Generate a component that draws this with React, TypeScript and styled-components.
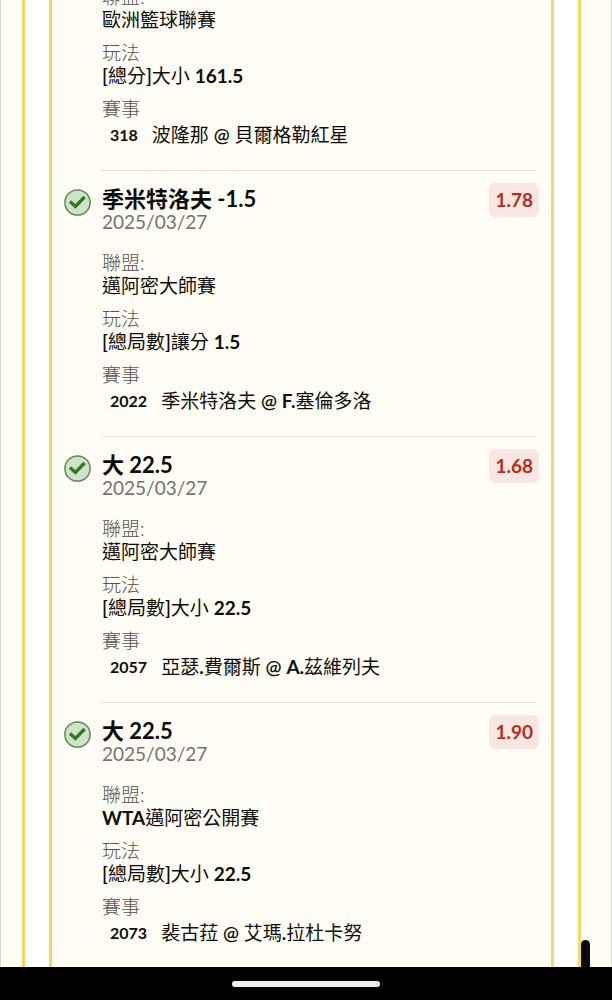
import React from "react";
import styled, { createGlobalStyle } from "styled-components";

const GlobalStyle = createGlobalStyle`
  * { box-sizing: border-box; }
  body {
    margin: 0;
    background: #fffdf5;
    color: #100e0a;
    font-family: Lato, "Noto Sans CJK TC", sans-serif;
    font-size: 19px;
    line-height: 23px;
  }
`;

const Screen = styled.div`
  display: flex;
  flex-direction: column;
  height: 100vh;
`;

const ScrollArea = styled.main`
  position: relative;
  flex: 1;
  min-height: 0;
  display: flex;
  flex-direction: column;
  justify-content: flex-end;
  overflow: hidden;
  padding: 0 30px 0 21px;
  border: solid #d6d5ce;
  border-width: 0 1px;
`;

const Panel = styled.section`
  background: #ffffff;
  border: solid;
  border-color: #f2da64 #f2da64 #f2da64 #f8d45a;
  border-width: 0 3px;
  padding: 0 24px;
`;

const SlipList = styled.ul`
  list-style: none;
  margin: 0;
  padding: 0 15px 0 12px;
  background: #fffdf5;
  border: solid;
  border-color: #f2da64 #f2da64 #f2da64 #f8d45a;
  border-width: 0 3px;
`;

const Slip = styled.li`
  display: grid;
  grid-template-columns: 27px 1fr;
  column-gap: 11px;

  &:last-child { margin-bottom: -1px; }
`;

const StatusIcon = styled.svg`
  width: 27px;
  height: 27px;
  margin-top: 19px;
`;

const Body = styled.div<{ $divided: boolean }>`
  grid-column: 2;
  border-top: ${(p) => (p.$divided ? "1px solid #e6e2d8" : "none")};
  padding: ${(p) => (p.$divided ? "16px" : "0")} 0 24px;
`;

const Header = styled.header`
  display: flex;
  justify-content: space-between;
  align-items: flex-start;
  height: 64px;
`;

const Title = styled.h2`
  margin: 0;
  font-size: 22px;
  font-weight: 700;
  line-height: 23px;
  color: #0c0b08;
`;

const PlacedOn = styled.time`
  display: block;
  color: #75736e;
`;

const Odds = styled.span`
  margin: -4px -3px 0 0;
  padding: 0 6px;
  border-radius: 6px;
  background: #f9e6e1;
  color: #b52c25;
  font-weight: 700;
  line-height: 34px;
`;

const Details = styled.dl`
  margin: 0;
`;

const Label = styled.dt`
  color: #56544f;
  font-weight: 300;
`;

const Value = styled.dd`
  margin: 0 0 10px;
`;

const MatchValue = styled.dd`
  display: flex;
  align-items: center;
  gap: 14px;
  margin: 3px 0 0 8px;
`;

const MatchNumber = styled.span`
  font-size: 16px;
  font-weight: 700;
`;

const Strong = styled.span`
  font-weight: 700;
`;

const Medium = styled.span`
  font-weight: 600;
`;

const ScrollThumb = styled.div`
  position: absolute;
  right: 21px;
  bottom: -20px;
  width: 9px;
  height: 47px;
  border-radius: 5px;
  background: #0a0a0a;
`;

const HomeBar = styled.footer`
  display: flex;
  align-items: center;
  justify-content: center;
  height: 33px;
  background: #000000;
`;

const HomeHandle = styled.div`
  width: 148px;
  height: 6px;
  border-radius: 3px;
  background: #efefef;
`;

interface Bet {
  pick?: string;
  date?: string;
  odds?: string;
  league: string;
  market: string;
  matchId: string;
  match: string;
}

const bets: Bet[] = [
  { league: "歐洲籃球聯賽", market: "[總分]大小 161.5", matchId: "318", match: "波隆那 @ 貝爾格勒紅星" },
  {
    pick: "季米特洛夫 -1.5", date: "2025/03/27", odds: "1.78",
    league: "邁阿密大師賽", market: "[總局數]讓分 1.5", matchId: "2022", match: "季米特洛夫 @ F.塞倫多洛",
  },
  {
    pick: "大 22.5", date: "2025/03/27", odds: "1.68",
    league: "邁阿密大師賽", market: "[總局數]大小 22.5", matchId: "2057", match: "亞瑟.費爾斯 @ A.茲維列夫",
  },
  {
    pick: "大 22.5", date: "2025/03/27", odds: "1.90",
    league: "WTA邁阿密公開賽", market: "[總局數]大小 22.5", matchId: "2073", match: "裴古菈 @ 艾瑪.拉杜卡努",
  },
];

// Latin letters and figures are set heavier than the Chinese around them.
function Mixed({ text }: { text: string }) {
  return (
    <>
      {text.split(/([A-Za-z0-9.]+|[@[\]])/).map((part, i) => {
        if (/^[A-Za-z0-9.]+$/.test(part)) return <Strong key={i}>{part}</Strong>;
        if (/^[@[\]]$/.test(part)) return <Medium key={i}>{part}</Medium>;
        return part;
      })}
    </>
  );
}

function WonIcon() {
  return (
    <StatusIcon viewBox="0 0 27 27" role="img" aria-label="Won">
      <circle cx="13.5" cy="13.5" r="12.6" fill="#cfe3c9" stroke="#5c8a58" strokeWidth="1.5" />
      <path d="M6 12.6 L11.4 17.4 L20.6 8" fill="none" stroke="#2f7a22" strokeWidth="3.4" />
    </StatusIcon>
  );
}

function BetSlip({ bet }: { bet: Bet }) {
  const settled = Boolean(bet.pick);
  return (
    <Slip>
      {settled && <WonIcon />}
      <Body $divided={settled}>
        {settled && (
          <Header>
            <div>
              <Title>{bet.pick}</Title>
              <PlacedOn>{bet.date}</PlacedOn>
            </div>
            <Odds>{bet.odds}</Odds>
          </Header>
        )}
        <Details>
          <Label>聯盟:</Label>
          <Value><Mixed text={bet.league} /></Value>
          <Label>玩法</Label>
          <Value><Mixed text={bet.market} /></Value>
          <Label>賽事</Label>
          <MatchValue>
            <MatchNumber>{bet.matchId}</MatchNumber>
            <span><Mixed text={bet.match} /></span>
          </MatchValue>
        </Details>
      </Body>
    </Slip>
  );
}

export default function App() {
  return (
    <>
      <GlobalStyle />
      <Screen>
        <ScrollArea>
          <Panel>
            <SlipList>
              {bets.map((bet) => <BetSlip key={bet.matchId} bet={bet} />)}
            </SlipList>
          </Panel>
          <ScrollThumb />
        </ScrollArea>
        <HomeBar><HomeHandle /></HomeBar>
      </Screen>
    </>
  );
}
